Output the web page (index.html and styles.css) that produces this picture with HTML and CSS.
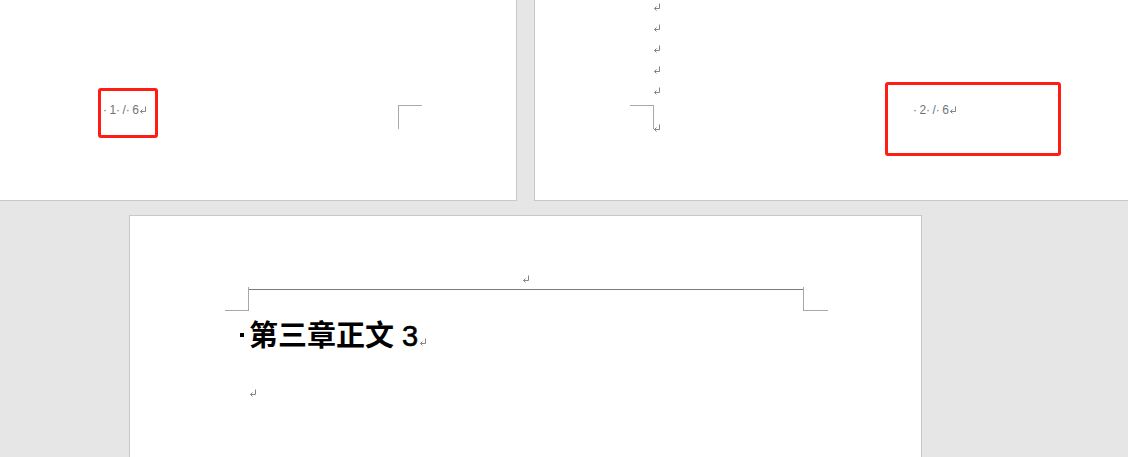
FILE: index.html
```html
<!DOCTYPE html>
<html lang="zh">
<head>
<meta charset="utf-8">
<title>Document pages</title>
<link rel="stylesheet" href="styles.css">
</head>
<body>
<div class="canvas">
  <div class="row-top">
    <section class="page page-one">
      <div class="pn-box pn-box-one"><span class="pn">·&thinsp;1·&thinsp;/·&thinsp;6<svg class="pm" viewBox="0 0 8 8"><path d="M6.5 0.5V5.5H1.5M3.5 3.5L1.5 5.5L3.5 7.5"/></svg></span></div>
      <div class="crop crop-tl crop-one"></div>
    </section>
    <section class="page page-two">
      <div class="marks-col">
        <div class="pm-line"><svg class="pm" viewBox="0 0 8 8"><path d="M6.5 0.5V5.5H1.5M3.5 3.5L1.5 5.5L3.5 7.5"/></svg></div>
        <div class="pm-line"><svg class="pm" viewBox="0 0 8 8"><path d="M6.5 0.5V5.5H1.5M3.5 3.5L1.5 5.5L3.5 7.5"/></svg></div>
        <div class="pm-line"><svg class="pm" viewBox="0 0 8 8"><path d="M6.5 0.5V5.5H1.5M3.5 3.5L1.5 5.5L3.5 7.5"/></svg></div>
        <div class="pm-line"><svg class="pm" viewBox="0 0 8 8"><path d="M6.5 0.5V5.5H1.5M3.5 3.5L1.5 5.5L3.5 7.5"/></svg></div>
        <div class="pm-line"><svg class="pm" viewBox="0 0 8 8"><path d="M6.5 0.5V5.5H1.5M3.5 3.5L1.5 5.5L3.5 7.5"/></svg></div>
        <div class="crop crop-tr crop-two"></div>
        <div class="pm-line pm-last"><svg class="pm" viewBox="0 0 8 8"><path d="M6.5 0.5V5.5H1.5M3.5 3.5L1.5 5.5L3.5 7.5"/></svg></div>
      </div>
      <div class="pn-box pn-box-two"><span class="pn">·&thinsp;2·&thinsp;/·&thinsp;6<svg class="pm" viewBox="0 0 8 8"><path d="M6.5 0.5V5.5H1.5M3.5 3.5L1.5 5.5L3.5 7.5"/></svg></span></div>
    </section>
  </div>
  <section class="page page-three">
    <div class="header-para"><svg class="pm" viewBox="0 0 8 8"><path d="M6.5 0.5V5.5H1.5M3.5 3.5L1.5 5.5L3.5 7.5"/></svg></div>
    <div class="crop-row">
      <div class="crop crop-bl"></div>
      <div class="crop crop-br"></div>
    </div>
    <h1 class="heading"><span class="keep-mark"></span>第三章正文 <span class="num">3</span><svg class="pm pm-h" viewBox="0 0 8 8"><path d="M6.5 0.5V5.5H1.5M3.5 3.5L1.5 5.5L3.5 7.5"/></svg></h1>
    <p class="body-para"><svg class="pm" viewBox="0 0 8 8"><path d="M6.5 0.5V5.5H1.5M3.5 3.5L1.5 5.5L3.5 7.5"/></svg></p>
  </section>
</div>
</body>
</html>
```

FILE: styles.css
```css
html, body {
  margin: 0;
  padding: 0;
  background: #e6e6e6;
  overflow: hidden;
}

body {
  width: 1128px;
  height: 457px;
  font-family: "Liberation Sans", "Noto Sans CJK SC", sans-serif;
}

.canvas {
  display: flex;
  flex-direction: column;
  gap: 14px;
}

.row-top {
  display: flex;
  gap: 17px;
}

.page {
  background: #fff;
  box-sizing: border-box;
  border: 1px solid #c8c8c8;
}

.page-one {
  width: 517px;
  height: 201px;
  border-top: none;
  border-left: none;
  display: flex;
  align-items: flex-start;
  padding: 88px 0 0 98px;
}

.page-two {
  width: 594px;
  height: 201px;
  border-top: none;
  border-right: none;
  display: flex;
  align-items: flex-start;
  padding-left: 95px;
}

.page-three {
  width: 793px;
  height: 260px;
  margin-left: 129px;
  border-bottom: none;
  padding-top: 56px;
}

/* paragraph mark */
.pm {
  width: 8px;
  height: 8px;
  fill: none;
  stroke: #858585;
  stroke-width: 1;
  vertical-align: 0;
}

.pn-box {
  box-sizing: border-box;
  border: 3px solid #ff1c14;
  border-radius: 3px;
}

.pn {
  font-size: 12px;
  line-height: 14px;
  color: #737373;
  white-space: nowrap;
}

.pn-box-one {
  width: 60px;
  height: 50px;
  padding: 9px 0 0 2px;
}

.pn-box-two {
  width: 176px;
  height: 74px;
  margin-left: 215px;
  margin-top: 82px;
  padding: 15px 0 0 25px;
}

.crop {
  box-sizing: border-box;
  border: 0 solid #a8a8a8;
}

.crop-tl {
  width: 24px;
  height: 24px;
  border-top-width: 1px;
  border-left-width: 1px;
}

.crop-one {
  margin-left: 240px;
  margin-top: 17px;
}

.marks-col {
  width: 40px;
  margin-top: -5px;
}

.pm-line {
  height: 21px;
  line-height: 21px;
  padding-left: 23px;
}

.crop-tr {
  width: 24px;
  height: 24px;
  margin-top: 5px;
  border-top-width: 1px;
  border-right-width: 1px;
}

.pm-last {
  margin-top: -13px;
}

.header-para {
  box-sizing: border-box;
  width: 556px;
  height: 18px;
  margin-left: 118px;
  line-height: 12px;
  text-align: center;
  border-bottom: 1px solid #7a7a7a;
}

.crop-row {
  display: flex;
  justify-content: space-between;
  width: 603px;
  margin-left: 95px;
  margin-top: -3px;
}

.crop-bl {
  width: 24px;
  height: 24px;
  border-right-width: 1px;
  border-bottom-width: 1px;
}

.crop-br {
  width: 25px;
  height: 24px;
  border-left-width: 1px;
  border-bottom-width: 1px;
}

.heading {
  margin: 5px 0 0 110px;
  font-size: 29px;
  line-height: 40px;
  font-weight: bold;
  color: #000;
  white-space: nowrap;
}

.num {
  font-weight: normal;
  -webkit-text-stroke: 0.6px #000;
}

.keep-mark {
  display: inline-block;
  width: 4px;
  height: 4px;
  background: #000;
  margin-right: 5px;
  vertical-align: 0.3em;
}

.pm-h {
  margin-left: 1px;
}

.body-para {
  margin: 26px 0 0 119px;
  line-height: 20px;
}
```
